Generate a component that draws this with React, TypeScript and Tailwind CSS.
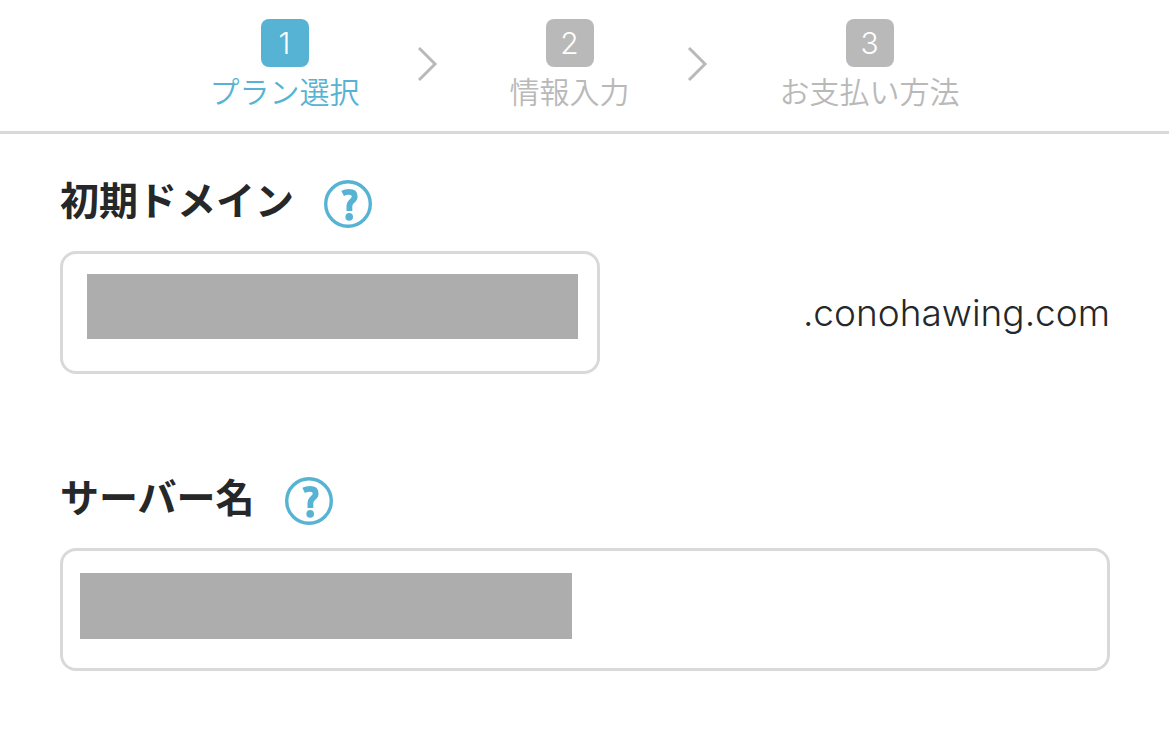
import React from 'react';
import clsx from 'clsx';

type Step = {
  number: number;
  label: string;
  active?: boolean;
};

const steps: Step[] = [
  { number: 1, label: 'プラン選択', active: true },
  { number: 2, label: '情報入力' },
  { number: 3, label: 'お支払い方法' },
];

const Chevron = () => (
  <svg width="38" height="38" viewBox="0 0 38 38" fill="none" stroke="#b9b9b9" strokeWidth="3" aria-hidden="true">
    <path d="M3 3 19 19 3 35" />
  </svg>
);

const StepBar = () => (
  <header className="border-b-3 border-[#d9d9d9] px-4 pt-[19px] pb-[22px]">
    <ol className="flex justify-center gap-14">
      {steps.map((step, index) => (
        <li key={step.number} className="flex items-center gap-14">
          <div className={clsx('flex flex-col items-center', step.active ? 'text-[#56b3d3]' : 'text-[#b9b9b9]')}>
            <span
              className={clsx(
                "flex size-12 items-center justify-center rounded-lg font-['Inter',sans-serif] text-[30px] leading-none font-light text-white",
                step.active ? 'bg-[#56b3d3]' : 'bg-[#b9b9b9]'
              )}
            >
              {step.number}
            </span>
            <span className="pt-1 text-[30px] leading-[38px] font-[350] whitespace-nowrap">{step.label}</span>
          </div>
          {index < steps.length - 1 && <Chevron />}
        </li>
      ))}
    </ol>
  </header>
);

const HelpButton = ({ label }: { label: string }) => (
  <button type="button" aria-label={label} className="size-12 rounded-full text-[#56b3d3]">
    <svg viewBox="0 0 48 48" fill="none" stroke="currentColor" aria-hidden="true">
      <circle cx="24" cy="24" r="22.3" strokeWidth="3.4" />
      <path d="M18.6 13.4C21 12.2 23 11.9 25 11.9C28.8 11.9 30.7 13.6 30.7 16.4C30.7 21.2 25.4 20.6 25.4 26.2V31" strokeWidth="5.8" />
      <circle cx="25.2" cy="36.9" r="3.8" fill="currentColor" stroke="none" />
    </svg>
  </button>
);

type FieldProps = {
  id: string;
  label: string;
  suffix?: string;
  inputClassName?: string;
  maskClassName: string;
};

const Field = ({ id, label, suffix, inputClassName = '', maskClassName }: FieldProps) => (
  <div>
    <div className="flex items-center gap-[30px]">
      <label htmlFor={id} className="pb-3 text-[39px] leading-9 font-bold">
        {label}
      </label>
      <HelpButton label={`${label}について`} />
    </div>
    <div className="mt-[23px] flex items-center justify-between gap-6">
      <div className={clsx('relative w-full', inputClassName)}>
        <input
          id={id}
          type="text"
          className="block h-[123px] w-full rounded-2xl border-3 border-[#d9d9d9] bg-white px-6 text-[37px] outline-none"
        />
        <div className={clsx('pointer-events-none absolute bg-[#adadad]', maskClassName)} />
      </div>
      {suffix && <span className="font-['Inter',sans-serif] text-[37px] leading-10 font-light">{suffix}</span>}
    </div>
  </div>
);

export default function App() {
  return (
    <div className="min-h-screen bg-white font-['Noto_Sans_CJK_JP',sans-serif] text-[#252729]">
      <StepBar />
      <main className="flex flex-col gap-[103px] pt-[46px] pr-[59px] pb-15 pl-15">
        <Field
          id="domain"
          label="初期ドメイン"
          suffix=".conohawing.com"
          inputClassName="max-w-[540px]"
          maskClassName="top-[23px] right-[22px] left-[27px] h-[65px]"
        />
        <Field id="server" label="サーバー名" maskClassName="top-[25px] left-5 h-[66px] w-[492px]" />
      </main>
    </div>
  );
}
